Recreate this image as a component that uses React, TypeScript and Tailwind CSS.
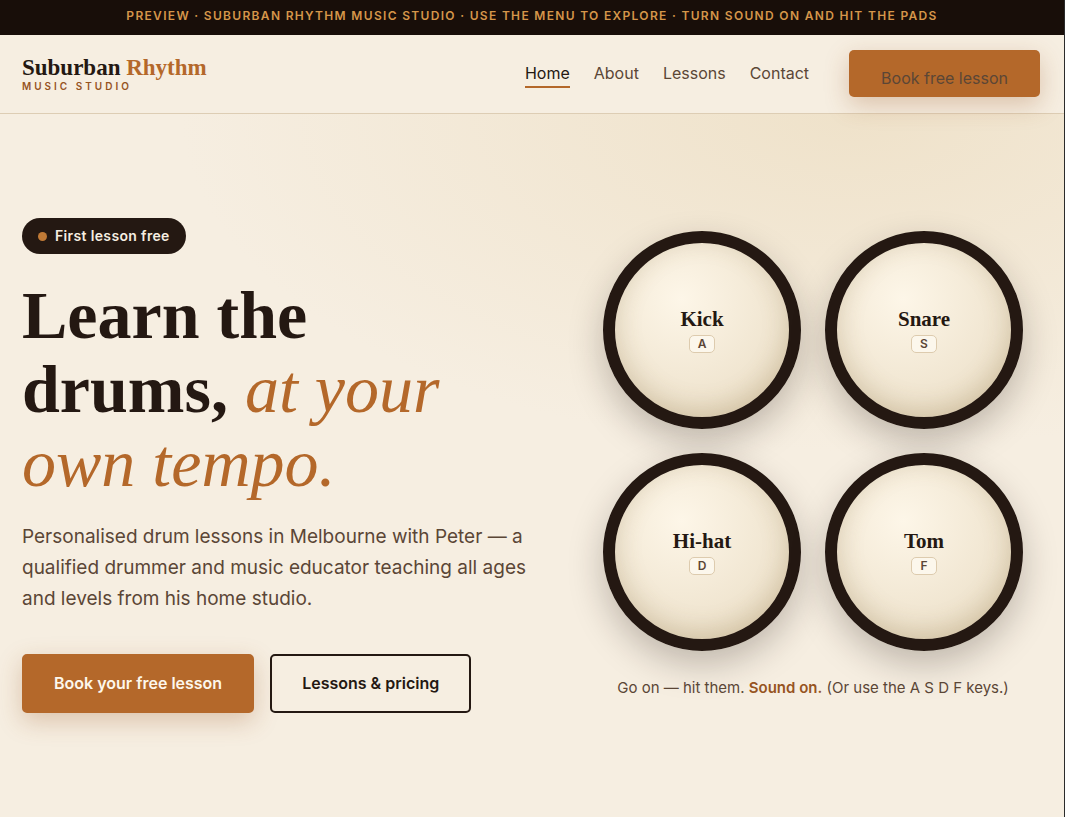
import { useEffect, useState } from "react";

type Pad = {
  name: string;
  key: string;
};

const pads: Pad[] = [
  { name: "Kick", key: "A" },
  { name: "Snare", key: "S" },
  { name: "Hi-hat", key: "D" },
  { name: "Tom", key: "F" },
];

const links = ["Home", "About", "Lessons", "Contact"];

function Header() {
  return (
    <header className="relative z-10 flex items-center justify-between border-b border-[#ddcdb4] px-[22px] pt-[15px] pb-4">
      <a href="#home" className="flex flex-col">
        <span className="font-['Liberation_Serif',serif] text-[23px] leading-6 font-bold text-[#241812]">
          Suburban <span className="text-[#b4682a]">Rhythm</span>
        </span>
        <span className="text-[10px] leading-3 font-semibold tracking-[3px] text-[#96541f] uppercase">
          Music Studio
        </span>
      </a>

      <nav className="mr-[2px] flex items-center gap-6 text-base text-[#5b4636]">
        {links.map((link) => (
          <a
            key={link}
            href={`#${link.toLowerCase()}`}
            className={
              link === "Home"
                ? "border-b-2 border-[#b4682a] pt-px pb-px text-[#241812]"
                : "border-b-2 border-transparent pt-px pb-px"
            }
          >
            {link}
          </a>
        ))}
        <a
          href="#book"
          className="ml-4 rounded-[5px] bg-[#b4682a] px-8 pt-4 pb-[7px] shadow-[0_8px_24px_rgba(150,84,31,0.28)]"
        >
          Book free lesson
        </a>
      </nav>
    </header>
  );
}

function DrumPads() {
  const [active, setActive] = useState("");

  // Light up a pad when its key is pressed
  useEffect(() => {
    const down = (e: KeyboardEvent) => setActive(e.key.toUpperCase());
    const up = () => setActive("");
    window.addEventListener("keydown", down);
    window.addEventListener("keyup", up);
    return () => {
      window.removeEventListener("keydown", down);
      window.removeEventListener("keyup", up);
    };
  }, []);

  return (
    <div className="mx-auto w-full max-w-[420px]">
      <div className="grid grid-cols-2 gap-6">
        {pads.map((pad) => (
          <button
            key={pad.key}
            type="button"
            className={`flex aspect-square flex-col items-center justify-center gap-1 rounded-full border-[12px] bg-[radial-gradient(circle_at_38%_32%,#fdf6e8,#f0e5d0_62%,#e2d3b5)] shadow-[0_14px_34px_rgba(36,24,18,0.25),inset_0_-6px_26px_rgba(120,90,40,0.22)] ${
              active === pad.key ? "border-[#b4682a]" : "border-[#241812]"
            }`}
          >
            <span className="font-['Liberation_Serif',serif] text-[21px] leading-6 font-bold text-[#241812]">
              {pad.name}
            </span>
            <kbd className="rounded-[5px] border border-[#ddcbae] bg-[#fcf7ec] px-2 font-['Inter',sans-serif] text-[12px] leading-4 font-semibold text-[#5b4636]">
              {pad.key}
            </kbd>
          </button>
        ))}
      </div>
      <p className="mt-[25px] text-center text-[15px] leading-6 text-[#5b4636]">
        Go on — hit them. <strong className="font-semibold text-[#96541f]">Sound on.</strong> (Or use the A S D F
        keys.)
      </p>
    </div>
  );
}

function Hero() {
  return (
    <section className="grid grid-cols-[1.105fr_1fr] items-center gap-14 bg-[radial-gradient(105%_80%_at_80%_0%,#efe2ca,transparent_60%)] px-[22px] py-[104px]">
      <div>
        <span className="inline-flex items-center gap-2 rounded-full bg-[#241812] px-4 py-2 align-top text-[14px] leading-5 font-semibold tracking-wide text-[#f6eee1]">
          <span className="size-[9px] rounded-full bg-[#c07a36]" />
          First lesson free
        </span>
        <h1 className="mt-6 font-['Liberation_Serif',serif] text-[68px] leading-[74px] font-bold text-[#241812]">
          Learn the drums, <em className="font-normal text-[#b4682a]">at your own tempo.</em>
        </h1>
        <p className="mt-[21px] text-[19px] leading-[31px] text-[#5b4636]">
          Personalised drum lessons in Melbourne with Peter — a qualified drummer and music educator teaching all ages
          and levels from his home studio.
        </p>
        <div className="mt-10 flex gap-4 text-base font-semibold">
          <a
            href="#book"
            className="rounded-[5px] border-2 border-[#b4682a] bg-[#b4682a] px-[30px] py-4 leading-[23px] text-[#fdf7ec] shadow-[0_8px_24px_rgba(150,84,31,0.28)]"
          >
            Book your free lesson
          </a>
          <a
            href="#lessons"
            className="rounded-[5px] border-2 border-[#241812] px-[30px] py-4 leading-[23px] text-[#241812]"
          >
            Lessons &amp; pricing
          </a>
        </div>
      </div>
      <DrumPads />
    </section>
  );
}

export default function App() {
  return (
    <div className="min-h-screen border-r border-[#2b2b2b] bg-[#f6eee1] font-['Inter',sans-serif]">
      <div className="bg-[#180e09] px-4 pt-[6px] pb-[9px] text-center text-[12px] leading-5 font-semibold tracking-[0.11em] text-[#d5964a] uppercase">
        Preview · Suburban Rhythm Music Studio · Use the menu to explore · Turn sound on and hit the pads
      </div>
      <Header />
      <Hero />
    </div>
  );
}
